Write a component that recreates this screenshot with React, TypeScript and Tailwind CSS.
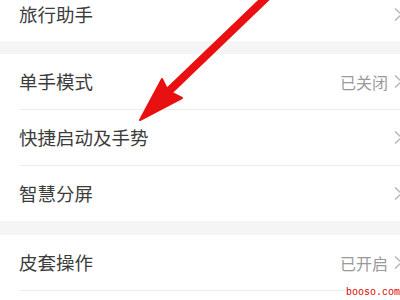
import React from "react";

const Chevron = () => (
  <svg width="9" height="15" viewBox="0 0 9 15" className="shrink-0">
    <path d="M1 1.5 L7.5 7.5 L1 13.5" fill="none" stroke="#b4b4b4" strokeWidth="1.4" />
  </svg>
);

const Row = ({ label, value, divider, h = "h-[55px]" }: { label: string; value?: string; divider?: boolean; h?: string }) => (
  <div className="bg-white">
    <div className={`flex items-center ${h} pl-[19px] pr-0`}>
      <span className="text-[18.5px] text-[#3c3c3c] flex-1 leading-none">{label}</span>
      {value && <span className="text-[16px] text-[#9a9a9a] mr-[6px] leading-none">{value}</span>}
      <div className="w-[9px] overflow-visible mr-[-3px]">
        <Chevron />
      </div>
    </div>
    {divider && <div className="ml-[19px] h-px bg-[#ececec]" />}
  </div>
);

export default function App() {
  return (
    <div
      className="relative w-[400px] h-[300px] overflow-hidden bg-white"
      style={{ fontFamily: '"Noto Sans CJK SC", "Noto Sans", sans-serif' }}
    >
      <div className="-mt-[12px]">
        <Row label="旅行助手" h="h-[53px]" />
        <div className="h-[13px] bg-[#f5f5f5]" />
        <Row label="单手模式" value="已关闭" divider />
        <Row label="快捷启动及手势" divider />
        <Row label="智慧分屏" />
        <div className="h-[14px] bg-[#f5f5f5]" />
        <Row label="皮套操作" value="已开启" divider />
      </div>

      <svg className="absolute left-0 top-0" width="400" height="300" viewBox="0 0 400 300">
        <line x1="268" y1="-4" x2="168" y2="92" stroke="#e81010" strokeWidth="8" strokeLinecap="round" />
        <polygon points="140,120 162,79 168,91 182,98" fill="#e81010" stroke="#e81010" strokeWidth="2" strokeLinejoin="round" />
      </svg>

      <div
        className="absolute right-0 bottom-[2px] text-[10px] leading-none text-[#e00000] bg-white pl-[1px]"
        style={{ fontFamily: '"Liberation Mono", monospace' }}
      >
        booso.com
      </div>
    </div>
  );
}
